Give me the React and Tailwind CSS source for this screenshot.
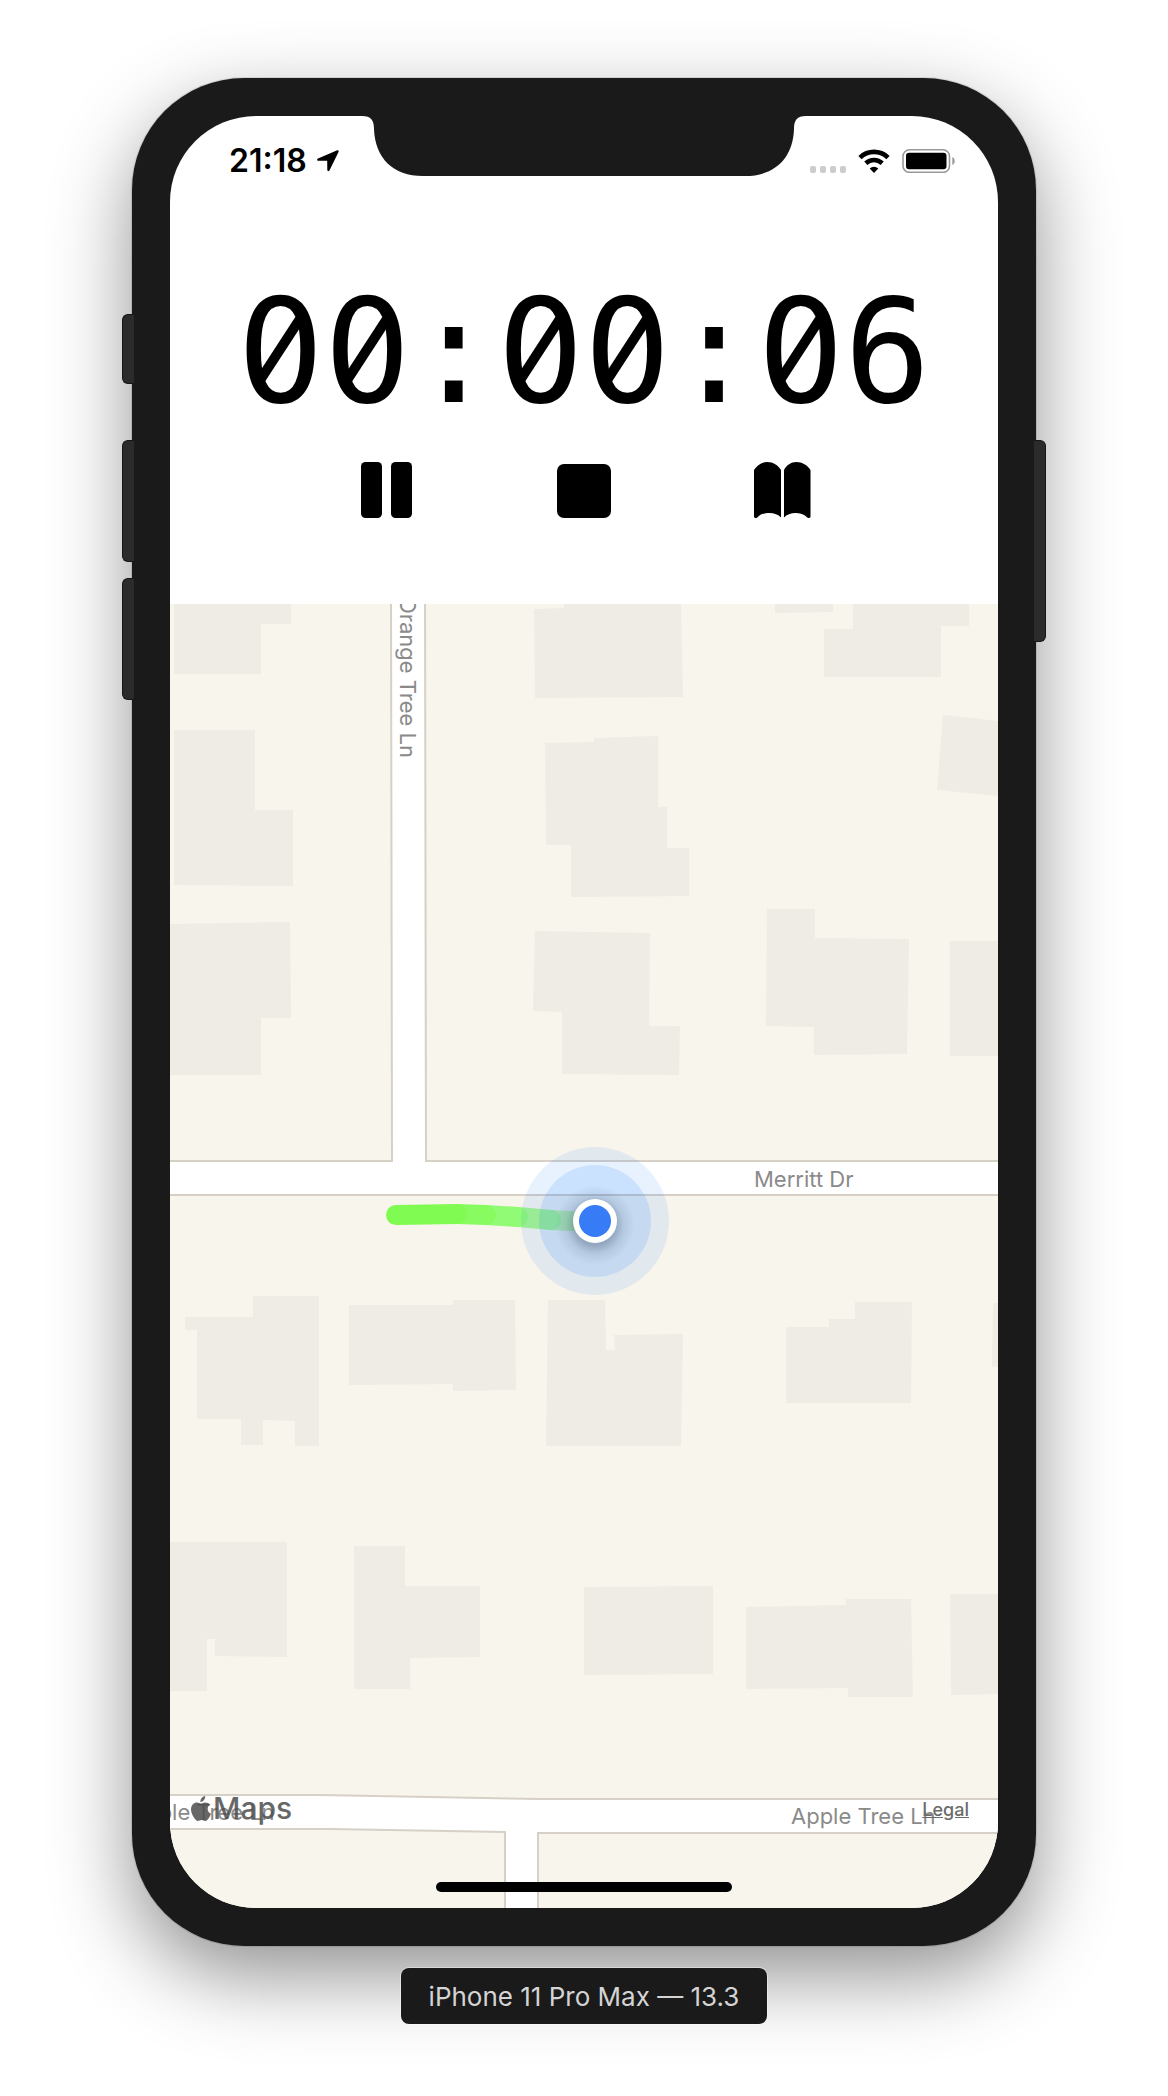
const INTER = "font-['Inter','Liberation_Sans',sans-serif]";

const HOUSES = [
  "174,604 291,604 291,624 261,624 261,674 174,674",
  "174,730 255,730 255,810 293,810 293,886 174,885",
  "170,924 290,922 291,1018 261,1018 261,1075 170,1075",
  "534,609 564,608 564,604 681,604 683,697 535,698",
  "545,743 594,742 594,738 658,736 658,807 667,807 667,848 689,848 689,896 571,897 571,845 546,845",
  "535,931 650,933 649,1026 680,1026 679,1075 562,1074 562,1012 533,1011",
  "775,604 833,604 833,612 775,613",
  "853,604 969,604 969,626 941,626 941,677 824,677 824,629 853,629",
  "943,715 998,721 998,796 937,790",
  "767,909 815,909 815,938 909,939 907,1054 814,1055 814,1027 766,1026",
  "950,941 998,941 998,1056 950,1056",
  "185,1317 253,1317 253,1296 319,1296 319,1446 295,1446 295,1421 263,1420 263,1445 241,1445 241,1419 197,1419 197,1330 185,1330",
  "349,1305 453,1305 453,1300 515,1300 516,1390 453,1391 453,1384 349,1385",
  "548,1300 605,1300 606,1350 615,1350 614,1335 683,1334 681,1446 546,1446",
  "786,1327 829,1327 829,1319 855,1319 855,1302 912,1302 911,1403 786,1403",
  "993,1303 998,1303 998,1367 992,1367",
  "170,1542 287,1542 287,1657 215,1656 215,1639 207,1639 207,1691 170,1691",
  "354,1546 405,1546 405,1586 480,1586 480,1657 410,1658 410,1689 354,1689",
  "584,1587 713,1586 713,1674 584,1675",
  "746,1607 846,1605 846,1599 911,1599 913,1697 848,1697 848,1688 746,1689",
  "950,1594 998,1594 998,1694 951,1695",
];

const ROADS = [
  "M391 590 L392 1161 H160 V1195 H1010 V1161 H426 L425 590 Z",
  "M160 1795 H320 L540 1799 H1010 V1833 H538 V1920 H505 V1832 L330 1829 H160 Z",
];

const TRAIL = [
  { d: "M550 1220 L592 1222", color: "#c8f3a7" },
  { d: "M518 1217 L551 1220", color: "#aaf88c" },
  { d: "M486 1215 L518 1217", color: "#92fb75" },
  { d: "M457 1214 L486 1215", color: "#88fb60" },
  { d: "M396 1215 L457 1214", color: "#80fb51" },
];

function StreetName({ children, ...place }) {
  return (
    <text fill="#8a8a8a" className={`${INTER} text-[22px]`} {...place}>
      {children}
    </text>
  );
}

function LocationArrow() {
  return (
    <svg viewBox="0 0 22 22" className="h-[22px] w-[22px]" aria-hidden="true">
      <path
        d="M20.3.3 1 8.6c-1.300.6-1.100 2.100.3 2.100l8.600.1c.2 0 .3.1.3.3l.1 8.600c0 1.700 1.700 2 2.400.4L21.500 2C22 .8 21.400-.1 20.300.3Z"
        fill="#000"
      />
    </svg>
  );
}

function WifiIcon() {
  return (
    <svg viewBox="0 0 32 24" className="h-6 w-8" aria-hidden="true">
      <g fill="none" stroke="#000" strokeWidth="4.600">
        <path d="M2 8.600A20 20 0 0 1 30 8.600" />
        <path d="M7.800 14.300A12 12 0 0 1 24.200 14.300" />
      </g>
      <path d="M16 24l-4.300-4.400a6.200 6.200 0 0 1 8.600 0Z" fill="#000" />
    </svg>
  );
}

function BatteryIcon() {
  return (
    <svg viewBox="0 0 54 24" className="h-6 w-[54px]" aria-hidden="true">
      <rect x="1" y="0.800" width="46.500" height="22.600" rx="6.500" fill="none" stroke="#999" strokeWidth="1.600" />
      <rect x="4" y="3.700" width="40.500" height="16.600" rx="3.200" fill="#000" />
      <path d="M50.300 8c3.200 1.300 3.200 6.700 0 8Z" fill="#999" />
    </svg>
  );
}

function StatusBar() {
  return (
    <div className="flex h-[88px] items-center justify-between pt-[2px] pr-[42px] pl-[59px]">
      <div className="flex items-center gap-[10px]">
        <time className={`${INTER} text-[32px] leading-8 font-semibold`}>21:18</time>
        <LocationArrow />
      </div>
      <div className="flex items-center">
        <div className="mt-4 mr-3 flex gap-1">
          {[0, 1, 2, 3].map((i) => (
            <span key={i} className="h-[7px] w-[6px] rounded-[2px] bg-[#cccccc]" />
          ))}
        </div>
        <WifiIcon />
        <span className="w-3" />
        <BatteryIcon />
      </div>
    </div>
  );
}

function Notch() {
  return (
    <svg
      viewBox="0 0 444 60"
      className="absolute top-[38px] left-1/2 w-[444px] -translate-x-1/2"
      aria-hidden="true"
    >
      <path
        d="M0 0H444C435 0 432 4 432 13C431 42 413 60 383 60H61C31 60 13 42 12 13C12 4 9 0 0 0Z"
        fill="#1a1a1a"
      />
    </svg>
  );
}

function SlashedZero() {
  return (
    <span className="relative inline-block">
      0
      <svg viewBox="0 0 87 144" className="absolute inset-0 h-full w-full" aria-hidden="true">
        <circle cx="43" cy="69" r="13" fill="#fff" />
        <path d="M24 99 63 39" stroke="#000" strokeWidth="10" />
      </svg>
    </span>
  );
}

function Timer({ value }) {
  return (
    <div
      role="timer"
      className="mt-[76px] text-center font-['DejaVu_Sans_Mono',monospace] text-[144px] leading-[144px] whitespace-nowrap"
    >
      {value.split("").map((char, i) => (char === "0" ? <SlashedZero key={i} /> : char))}
    </div>
  );
}

function Controls() {
  return (
    <div className="mt-[38px] flex justify-center gap-[140px]">
      <button type="button" aria-label="Pause">
        <svg viewBox="0 0 58 56" className="h-14 w-[58px]">
          <rect x="4" y="0" width="21" height="56" rx="4.500" />
          <rect x="34" y="0" width="21" height="56" rx="4.500" />
        </svg>
      </button>
      <button type="button" aria-label="Stop">
        <svg viewBox="0 0 58 56" className="h-14 w-[58px]">
          <rect x="2" y="2" width="54" height="54" rx="7" />
        </svg>
      </button>
      <button type="button" aria-label="History">
        <svg viewBox="0 0 58 56" className="h-14 w-[58px]">
          <path d="M1 8C4 3 9 0 14.500 0S25 3 28 8V55.500C25.500 52.500 21 51 16.500 51S7.500 52 4.500 55.300C3.200 56.600 1 56.200 1 54.200Z" />
          <path d="M57.500 8C54.500 3 49 0 43.500 0S33.500 3 31 8V55.500C33.500 52.500 38 51 42.500 51S51 52 54 55.300C55.300 56.600 57.500 56.200 57.500 54.200Z" />
        </svg>
      </button>
    </div>
  );
}

function AppleMark() {
  return (
    <svg viewBox="0 0 20 25" className="h-[25px] w-5" aria-hidden="true">
      <path
        d="M14.200 0c.2 1.600-.5 3.100-1.400 4.200-.9 1.100-2.200 1.800-3.400 1.700-.2-1.500.5-3 1.300-4C11.600.9 13 .1 14.200 0Z"
        fill="#4d4d4d"
      />
      <path
        d="M19.200 8.600c-1.500 1-2.500 2.400-2.500 4.300 0 2.200 1.300 4 3.300 4.800-.5 1.600-1.300 3.100-2.300 4.600-.9 1.300-1.900 2.600-3.400 2.600s-1.900-.8-3.700-.8-2.300.8-3.700.8-2.500-1.200-3.500-2.600C1.300 19.400 0 16.300 0 13.600c0-4.600 3-7.100 5.900-7.100 1.600 0 2.900 1 3.900 1 .9 0 2.400-1.100 4.300-1.100 2 0 3.900.7 5.100 2.200Z"
        fill="#4d4d4d"
      />
    </svg>
  );
}

function RouteMap() {
  return (
    <div className="relative mt-[86px]">
      <svg
        viewBox="170 604 828 1304"
        className="block w-full"
        role="img"
        aria-label="Map with the recorded route near Merritt Dr"
      >
        <defs>
          <radialGradient id="dotShadow">
            <stop offset="0.500" stopColor="#1f3350" stopOpacity="0.300" />
            <stop offset="0.720" stopColor="#1f3350" stopOpacity="0.100" />
            <stop offset="1" stopColor="#1f3350" stopOpacity="0" />
          </radialGradient>
        </defs>
        <rect x="170" y="604" width="828" height="1304" fill="#f8f5ed" />
        {HOUSES.map((points) => (
          <polygon key={points} points={points} fill="#efece5" />
        ))}
        {ROADS.map((d) => (
          <path key={d} d={d} fill="#fff" stroke="#d7d0c6" strokeWidth="2" />
        ))}
        <StreetName transform="translate(400 758) rotate(90)" textAnchor="end">
          Orange Tree Ln
        </StreetName>
        <StreetName x="754" y="1187">Merritt Dr</StreetName>
        <StreetName x="791" y="1824">Apple Tree Ln</StreetName>
        <StreetName x="130" y="1820">Apple Tree Ln</StreetName>
        {TRAIL.map(({ d, color }) => (
          <path key={d} d={d} fill="none" stroke={color} strokeWidth="20" strokeLinecap="round" />
        ))}
        <circle cx="595" cy="1221" r="74" fill="#0071ff" fillOpacity="0.090" />
        <circle cx="595" cy="1221" r="56" fill="#0071ff" fillOpacity="0.120" />
        <circle cx="595" cy="1225" r="40" fill="url(#dotShadow)" />
        <circle cx="595" cy="1221" r="22" fill="#fff" />
        <circle cx="595" cy="1221" r="16" fill="#377cf6" />
      </svg>
      <div className="absolute bottom-[84px] left-[21px] flex items-center gap-[2px] opacity-85">
        <AppleMark />
        <span className={`${INTER} text-[30px] leading-8 font-medium text-[#4d4d4d]`}>Maps</span>
      </div>
      <a
        href="#legal"
        className={`${INTER} absolute right-[29px] bottom-[86px] text-[18px] leading-6 font-medium text-[#6b6b6b] underline`}
      >
        Legal
      </a>
      <div className="absolute bottom-4 left-1/2 h-[10px] w-[296px] -translate-x-1/2 rounded-full bg-black" />
    </div>
  );
}

const SIDE_BUTTON = "absolute w-3 border border-[#161616] bg-[#2b2b2b]";

export default function App() {
  return (
    <main className="flex min-h-screen flex-col items-center overflow-hidden bg-white pt-[78px] pb-[72px]">
      <div className="relative w-[904px] max-w-full">
        <div className="rounded-[112px] bg-[#1a1a1a] p-[38px] shadow-[0_0_0_1px_rgba(0,0,0,0.1),0_30px_80px_rgba(0,0,0,0.43)]">
          <div className="overflow-hidden rounded-[86px] bg-white">
            <StatusBar />
            <Timer value="00:00:06" />
            <Controls />
            <RouteMap />
          </div>
        </div>
        <span className={`${SIDE_BUTTON} top-[236px] -left-[10px] h-[70px] rounded-l-[6px] border-r-0`} />
        <span className={`${SIDE_BUTTON} top-[362px] -left-[10px] h-[122px] rounded-l-[6px] border-r-0`} />
        <span className={`${SIDE_BUTTON} top-[500px] -left-[10px] h-[122px] rounded-l-[6px] border-r-0`} />
        <span className={`${SIDE_BUTTON} top-[362px] -right-[10px] h-[202px] rounded-r-[6px] border-l-0`} />
        <Notch />
      </div>
      <p
        className={`${INTER} z-10 mt-[22px] flex h-14 w-[366px] items-center justify-center rounded-lg bg-[#1a1a1a] text-[26px] whitespace-nowrap text-[#d4d4d4] shadow-[0_0_0_1px_rgba(255,255,255,0.4)]`}
      >
        iPhone 11 Pro Max — 13.3
      </p>
    </main>
  );
}
